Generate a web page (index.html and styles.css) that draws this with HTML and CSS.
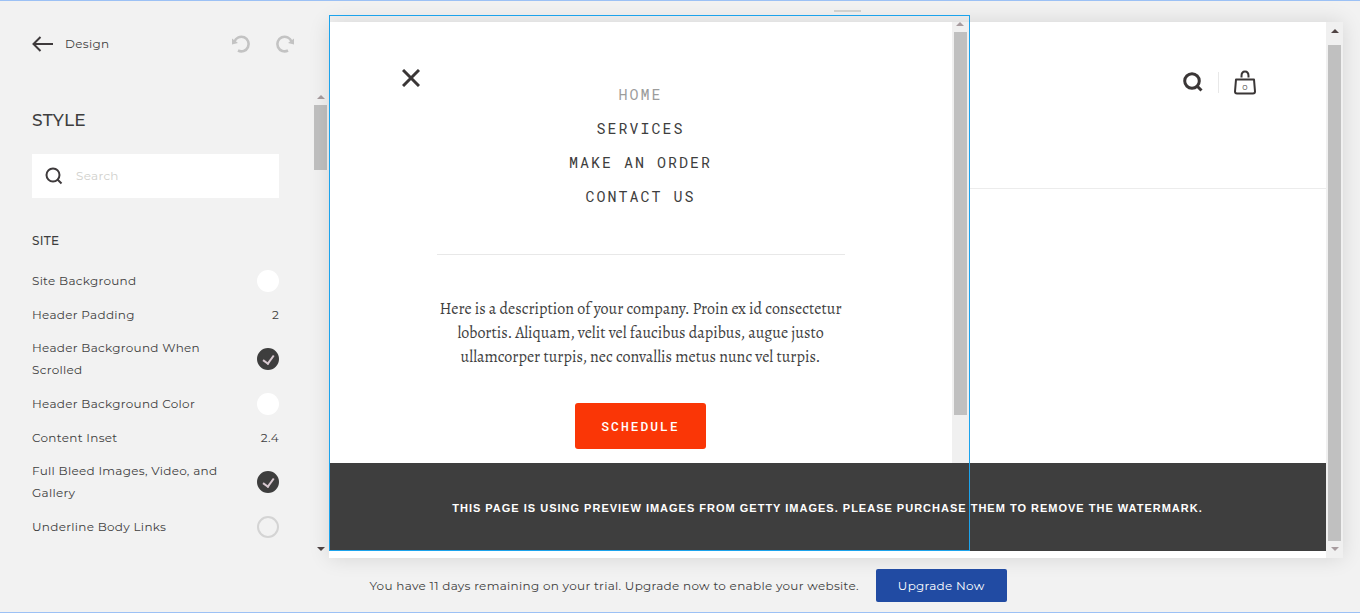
FILE: index.html
```html
<!DOCTYPE html>
<html lang="en">
<head>
    <meta charset="UTF-8">
    <meta name="viewport" content="width=device-width, initial-scale=1.0">
    <title>Design - Style</title>
    <link rel="stylesheet" href="styles.css">
</head>
<body>
    <div class="main">
        <aside class="sidebar">
            <div class="topbar">
                <a href="#" class="back">
                    <svg width="22" height="16" viewBox="0 0 22 16" fill="none" stroke="#3e3a3c" stroke-width="2"><path d="M21 8H2M8.500 1L1.500 8l7 7"/></svg>
                    Design
                </a>
                <button class="icon-btn" aria-label="Undo">
                    <svg width="20" height="20" viewBox="0 0 20 20"><path d="M3.500 7.500A7.300 7.300 0 1 1 7 16.500" fill="none" stroke="#c3c3c3" stroke-width="2.600"/><path d="M1 4.500v6l6-1.500z" fill="#c3c3c3"/></svg>
                </button>
                <button class="icon-btn" aria-label="Redo">
                    <svg width="20" height="20" viewBox="0 0 20 20"><path d="M16.500 7.500A7.300 7.300 0 1 0 13 16.500" fill="none" stroke="#c3c3c3" stroke-width="2.600"/><path d="M19 4.500v6l-6-1.500z" fill="#c3c3c3"/></svg>
                </button>
            </div>
            <div class="scroll-area">
                <div class="options">
                    <h1>STYLE</h1>
                    <label class="search">
                        <svg width="18" height="18" viewBox="0 0 18 18" fill="none" stroke="#3e3a3c" stroke-width="2"><circle cx="8" cy="8" r="6.500"/><path d="M12.500 12.500l4 4"/></svg>
                        <input type="text" placeholder="Search" aria-label="Search">
                    </label>
                    <h2>SITE</h2>
                    <div class="option"><span>Site Background</span><button class="swatch" aria-label="Site Background"></button></div>
                    <div class="option"><label for="header-padding">Header Padding</label><input type="text" id="header-padding" class="value" value="2"></div>
                    <div class="option"><label for="scrolled">Header Background When Scrolled</label><input type="checkbox" id="scrolled" checked></div>
                    <div class="option"><span>Header Background Color</span><button class="swatch" aria-label="Header Background Color"></button></div>
                    <div class="option"><label for="inset">Content Inset</label><input type="text" id="inset" class="value" value="2.4"></div>
                    <div class="option"><label for="bleed">Full Bleed Images, Video, and Gallery</label><input type="checkbox" id="bleed" checked></div>
                    <div class="option"><label for="underline">Underline Body Links</label><input type="checkbox" id="underline"></div>
                </div>
                <div class="scrollbar side-bar">
                    <span class="arrow up light"></span>
                    <span class="thumb"></span>
                    <span class="track"></span>
                    <span class="arrow down"></span>
                </div>
            </div>
        </aside>

        <div class="preview-col">
            <div class="handle"><span></span></div>
            <div class="preview">
                <div class="canvas">
                    <div class="site">
                        <div class="menu">
                            <div class="menu-content">
                                <button class="close" aria-label="Close menu">
                                    <svg width="18" height="18" viewBox="0 0 18 18" stroke="#3a3636" stroke-width="3"><path d="M1 1l16 16M17 1L1 17"/></svg>
                                </button>
                                <nav>
                                    <a href="#" class="active">HOME</a>
                                    <a href="#">SERVICES</a>
                                    <a href="#">MAKE AN ORDER</a>
                                    <a href="#">CONTACT US</a>
                                </nav>
                                <p>Here is a description of your company. Proin ex id consectetur lobortis. Aliquam, velit vel faucibus dapibus, augue justo ullamcorper turpis, nec convallis metus nunc vel turpis.</p>
                                <a href="#" class="schedule">SCHEDULE</a>
                            </div>
                            <div class="scrollbar menu-bar">
                                <span class="arrow up light"></span>
                                <span class="thumb"></span>
                                <span class="track"></span>
                            </div>
                        </div>
                        <div class="page">
                            <header>
                                <button class="icon-btn" aria-label="Search site">
                                    <svg width="20" height="20" viewBox="0 0 20 20" fill="none" stroke="#3a3636" stroke-width="3"><circle cx="9" cy="9" r="7.300"/><path d="M14 14l4.500 4.500"/></svg>
                                </button>
                                <span class="divider"></span>
                                <button class="icon-btn cart" aria-label="Cart">
                                    <svg width="22" height="25" viewBox="0 0 22 25" fill="none" stroke="#3a3636" stroke-width="2"><path d="M7.500 7.500V6q0-4.500 3.500-4.500t3.500 4.500v1.500"/><path d="M2 9.500h18l1 12q0 2-2 2H3q-2 0-2-2z" stroke-linejoin="round"/></svg>
                                    <span class="count">0</span>
                                </button>
                            </header>
                        </div>
                    </div>
                    <div class="banner">THIS PAGE IS USING PREVIEW IMAGES FROM GETTY IMAGES. PLEASE PURCHASE THEM TO REMOVE THE WATERMARK.</div>
                    <div class="outline"></div>
                </div>
                <div class="scrollbar page-bar">
                    <span class="arrow up"></span>
                    <span class="thumb"></span>
                    <span class="arrow down light"></span>
                </div>
            </div>
        </div>
    </div>

    <footer class="trial">
        <span>You have 11 days remaining on your trial. Upgrade now to enable your website.</span>
        <button class="upgrade">Upgrade Now</button>
    </footer>
</body>
</html>
```
FILE: styles.css
```css
* { box-sizing: border-box; }
body { margin: 0; min-height: 100vh; display: flex; flex-direction: column; background: #f2f2f2; color: #3e3e3e; font: 12px/22px Montserrat, Inter, "Open Sans", sans-serif; letter-spacing: 0.3px; border-top: 1px solid #9cc1f5; border-bottom: 1px solid #9cc1f5; }
a { color: inherit; text-decoration: none; }
button, input { font: inherit; color: inherit; letter-spacing: inherit; border: none; margin: 0; padding: 0; background: none; }
button { cursor: pointer; }
svg { display: block; }
.main { flex: 1; display: flex; }

/* sidebar */
.sidebar { width: 329px; flex: none; display: flex; flex-direction: column; }
.topbar { display: flex; align-items: center; gap: 24px; padding: 32px 34px 0 32px; }
.back { display: flex; align-items: center; gap: 11px; margin-right: auto; }
.scroll-area { flex: 1; display: flex; justify-content: space-between; padding: 37px 2px 2px 32px; }
.options { width: 247px; }
h1 { margin: 16px 0 22px; font-size: 17px; line-height: 24px; font-weight: 500; }
.search { display: flex; align-items: center; gap: 13px; height: 44px; padding: 0 13px; background: #fff; }
.search input { flex: 1; min-width: 0; outline: none; }
.search input::placeholder { color: #d0d0cc; opacity: 1; }
h2 { margin: 32px 0 11px; font-size: 12px; line-height: 22px; font-weight: 500; }
.option { display: flex; align-items: center; justify-content: space-between; min-height: 34px; padding: 6px 0 5px; }
.option span, .option label { max-width: 200px; }
.option .value { width: 40px; text-align: right; }
.swatch { width: 22px; height: 22px; border-radius: 50%; background: #fff; }
input[type=checkbox] { appearance: none; display: grid; place-items: center; width: 22px; height: 22px; border: 2px solid #d4d4d4; border-radius: 50%; }
input[type=checkbox]:checked { background: #3e3e3e; border-color: #3e3e3e; }
input[type=checkbox]:checked::after { content: ""; width: 5px; height: 9px; margin-bottom: 2px; border: solid #d8c8d0; border-width: 0 2px 2px 0; transform: rotate(36deg); }

/* scrollbars */
.scrollbar { display: flex; flex-direction: column; align-items: center; flex: none; }
.thumb { width: 13px; background: #c0c0c0; }
.arrow { border: solid transparent; border-width: 0 4px; }
.up { border-bottom: 4px solid #504444; }
.down { border-top: 4px solid #504444; }
.up.light { border-bottom-color: #a89c9f; }
.down.light { border-top-color: #a89c9f; }
.side-bar { padding: 3px 0 5px; gap: 6px; }
.side-bar .thumb { height: 65px; }
.side-bar .track { flex: 1; }
.menu-bar { width: 18px; padding-right: 2px; background: #f0f0f0; gap: 6px; }
.menu-bar .thumb { flex: 9; }
.menu-bar .track { flex: 1; }
.page-bar { width: 17px; padding: 7px 0; background: #f0f0f0; }
.page-bar .thumb { flex: 1; margin: 12px 0 6px; }

/* preview */
.preview-col { flex: 1; min-width: 0; display: flex; flex-direction: column; padding-right: 17px; }
.handle { height: 21px; display: flex; justify-content: center; padding: 9px 0 0 23px; }
.handle span { width: 27px; height: 2px; background: #d4d4d2; }
.preview { flex: 1; display: flex; background: #fff; box-shadow: 0 0 20px rgba(0, 0, 0, 0.12); }
.canvas { flex: 1; min-width: 0; position: relative; display: flex; flex-direction: column; padding-bottom: 7px; }
.site { flex: 1; display: flex; }
.outline { position: absolute; top: -7px; bottom: 7px; left: 0; width: 64.3%; border: 1px solid #1ca3ec; pointer-events: none; }
.menu { width: 64.3%; display: flex; }
.menu-content { flex: 1; position: relative; display: flex; flex-direction: column; align-items: center; padding: 55px 0 12px; }
.close { position: absolute; top: 47px; left: 73px; }
nav { width: 408px; display: flex; flex-direction: column; align-items: center; padding-bottom: 41px; border-bottom: 1px solid #e8e8e8; font: 15px/34px "Roboto Mono", "Liberation Mono", monospace; letter-spacing: 2px; }
.active { color: #9c9c9c; }
.menu p { width: 408px; margin: 42px 0 34px; font: 16px/24px Alegreya, "Liberation Serif", serif; letter-spacing: 0; text-align: center; }
.schedule { padding: 12px 26px; border-radius: 3px; background: #fa3606; color: #fff; font: 500 13px/22px "Roboto Mono", "Liberation Mono", monospace; letter-spacing: 2px; }
.page { flex: 1; }
header { display: flex; justify-content: flex-end; align-items: center; gap: 15px; height: 167px; padding: 0 70px 46px 0; border-bottom: 1px solid #ececec; }
.divider { width: 1px; height: 21px; background: #e8e8e8; }
.cart { position: relative; }
.count { position: absolute; top: 11px; left: 0; width: 100%; text-align: center; font-size: 8px; line-height: 12px; letter-spacing: 0; }
.banner { padding: 34px 0 32px; background: #3e3e3e; color: #fff; text-align: center; font: bold 11px/22px "Liberation Sans", Arial, sans-serif; letter-spacing: 1px; }

/* trial bar */
.trial { display: flex; justify-content: center; align-items: center; gap: 17px; padding: 11px 0 10px 16px; }
.upgrade { height: 33px; padding: 0 22px; border-radius: 2px; background: #214ba3; color: #fff; }
```
